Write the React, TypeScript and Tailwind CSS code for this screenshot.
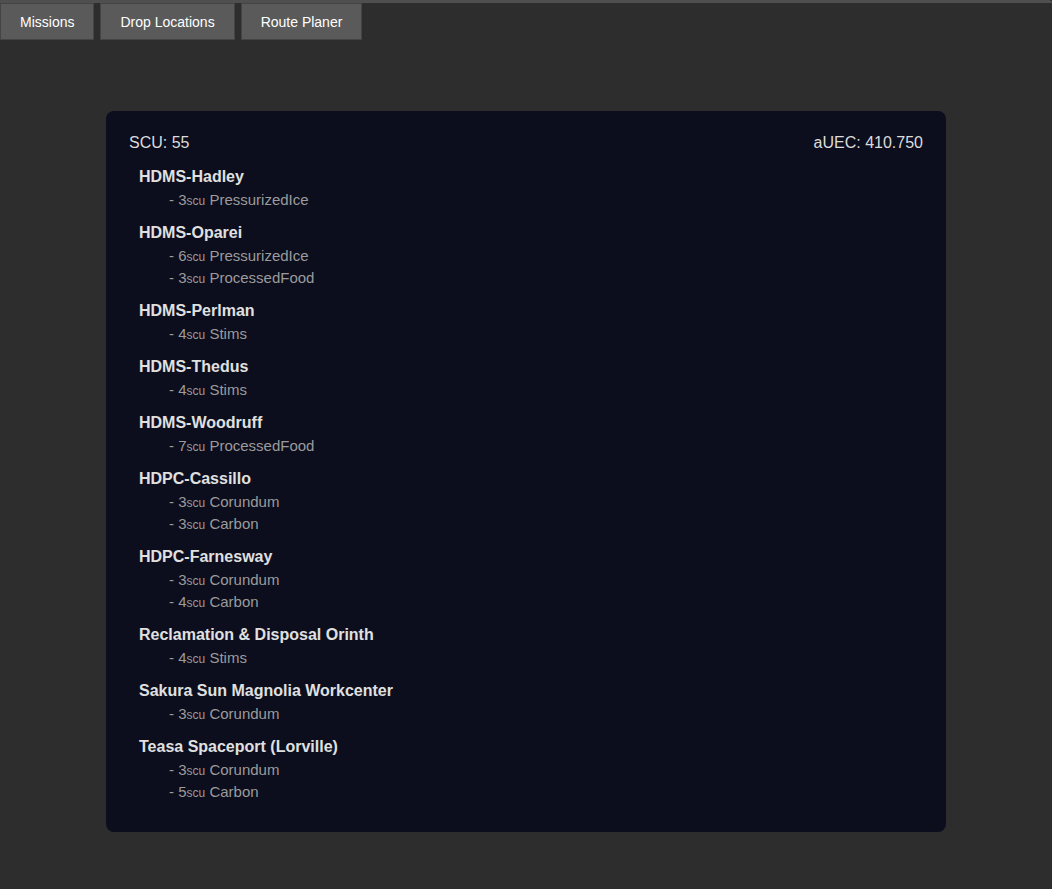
const drops: { name: string; items: [number, string][] }[] = [
  { name: 'HDMS-Hadley', items: [[3, 'PressurizedIce']] },
  { name: 'HDMS-Oparei', items: [[6, 'PressurizedIce'], [3, 'ProcessedFood']] },
  { name: 'HDMS-Perlman', items: [[4, 'Stims']] },
  { name: 'HDMS-Thedus', items: [[4, 'Stims']] },
  { name: 'HDMS-Woodruff', items: [[7, 'ProcessedFood']] },
  { name: 'HDPC-Cassillo', items: [[3, 'Corundum'], [3, 'Carbon']] },
  { name: 'HDPC-Farnesway', items: [[3, 'Corundum'], [4, 'Carbon']] },
  { name: 'Reclamation & Disposal Orinth', items: [[4, 'Stims']] },
  { name: 'Sakura Sun Magnolia Workcenter', items: [[3, 'Corundum']] },
  { name: 'Teasa Spaceport (Lorville)', items: [[3, 'Corundum'], [5, 'Carbon']] },
]

const tabs = ['Missions', 'Drop Locations', 'Route Planer']

export default function App() {
  return (
    <div className="min-h-[889px] bg-[#2d2d2d] font-['Liberation_Sans',Arial,sans-serif]">
      {/* window edge */}
      <div className="h-[3px] bg-[#4f4f4f] rounded-tr-md" />

      {/* tabs */}
      <nav className="flex gap-[6px]">
        {tabs.map((t) => (
          <button
            key={t}
            className="h-[37px] px-[19px] pt-[2px] bg-[#5a5a5a] border border-[#444] text-[14px] text-white"
          >
            {t}
          </button>
        ))}
      </nav>

      {/* cargo panel */}
      <main className="mx-auto mt-[71px] w-[840px] rounded-lg bg-[#0c0e1d] px-[23px] pt-[21px] pb-[19px]">
        <div className="flex justify-between text-[16px] leading-[22px] text-[#dcdcdc]">
          <span>SCU: 55</span>
          <span>aUEC: 410.750</span>
        </div>
        <div className="mt-[11px] pl-[10px]">
          {drops.map((d) => (
            <section key={d.name} className="mb-[10px]">
              <h3 className="text-[16px] leading-[24px] font-bold text-[#e0e0e0]">{d.name}</h3>
              {d.items.map(([n, c], i) => (
                <div key={i} className="pl-[30px] text-[15px] leading-[22px] text-[#9b9b9b]">
                  - {n}
                  <span className="text-[12px] leading-none">scu</span> {c}
                </div>
              ))}
            </section>
          ))}
        </div>
      </main>
    </div>
  )
}
